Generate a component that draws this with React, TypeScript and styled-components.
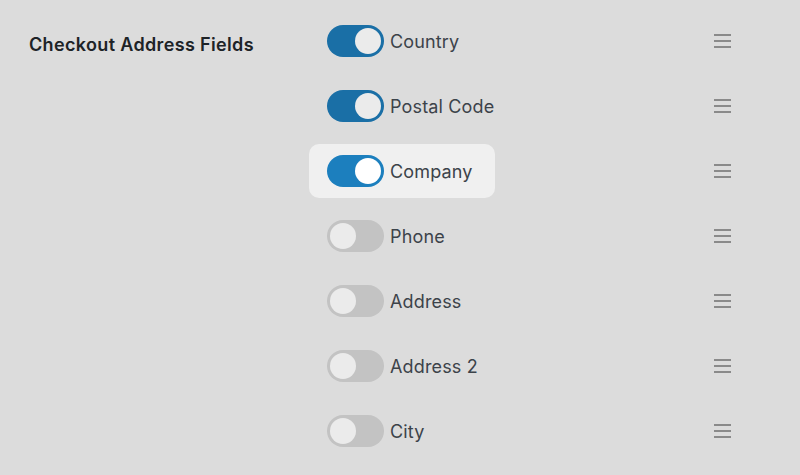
import styled, { createGlobalStyle } from 'styled-components';

const GlobalStyle = createGlobalStyle`
  html, body {
    margin: 0;
    padding: 0;
    background: #dcdcdc;
    font-family: Inter, "Liberation Sans", Arial, sans-serif;
  }
`;

type Field = { label: string; enabled: boolean; active?: boolean };

const fields: Field[] = [
  { label: 'Country', enabled: true },
  { label: 'Postal Code', enabled: true },
  { label: 'Company', enabled: true, active: true },
  { label: 'Phone', enabled: false },
  { label: 'Address', enabled: false },
  { label: 'Address 2', enabled: false },
  { label: 'City', enabled: false },
];

export default function App() {
  return (
    <>
      <GlobalStyle />
      <Page>
        <Heading>Checkout Address Fields</Heading>
        <FieldList>
          {fields.map((f) => (
            <Row key={f.label}>
              <Item $active={f.active}>
                <Toggle $on={f.enabled} $active={f.active}>
                  <Knob $on={f.enabled} $active={f.active} />
                </Toggle>
                <Label>{f.label}</Label>
              </Item>
              <Handle aria-hidden="true">
                <span />
                <span />
                <span />
              </Handle>
            </Row>
          ))}
        </FieldList>
      </Page>
    </>
  );
}

const Page = styled.div`
  display: grid;
  grid-template-columns: 309px 431px;
  padding-top: 14px;
  height: 475px;
  box-sizing: border-box;
`;

const Heading = styled.h2`
  margin: 20px 0 0 29px;
  font-size: 18px;
  font-weight: 600;
  color: #1d2327;
  line-height: 22px;
  letter-spacing: 0.35px;
`;

const FieldList = styled.div`
  display: flex;
  flex-direction: column;
  gap: 11px;
`;

const Row = styled.div`
  display: flex;
  align-items: center;
  justify-content: space-between;
`;

const Item = styled.div<{ $active?: boolean }>`
  display: flex;
  align-items: center;
  gap: 6px;
  height: 54px;
  box-sizing: border-box;
  padding: 0 22px 0 18px;
  border-radius: 10px;
  background: ${(p) => (p.$active ? '#f0f0f0' : 'transparent')};
`;

const Toggle = styled.div<{ $on: boolean; $active?: boolean }>`
  width: 57px;
  height: 32px;
  border-radius: 16px;
  box-sizing: border-box;
  padding: 3px;
  display: flex;
  justify-content: ${(p) => (p.$on ? 'flex-end' : 'flex-start')};
  align-items: center;
  background: ${(p) => (p.$on ? (p.$active ? '#1c7fbe' : '#1a6fa6') : '#c3c3c3')};
`;

const Knob = styled.div<{ $on: boolean; $active?: boolean }>`
  width: 26px;
  height: 26px;
  border-radius: 50%;
  background: ${(p) => (p.$active ? '#ffffff' : '#ebebeb')};
`;

const Label = styled.span`
  font-size: 18px;
  color: #3c434a;
  line-height: 24px;
  padding-top: 2px;
  letter-spacing: 0.15px;
`;

const Handle = styled.div`
  display: flex;
  flex-direction: column;
  gap: 4px;
  width: 17px;
  margin-right: 9px;

  span {
    display: block;
    height: 2px;
    background: #8a8a8a;
  }
`;
